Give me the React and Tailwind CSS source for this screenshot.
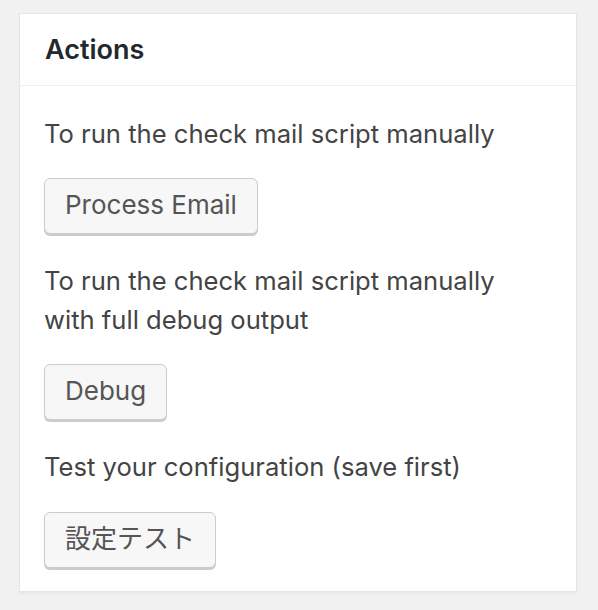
import React from 'react';

const ActionButton = ({ children }) => (
  <button
    type="button"
    className="h-[56px] px-[20px] pb-[2px] rounded-[6px] border border-[#cccccc] bg-[#f7f7f7] text-[#555555] text-[26px] leading-[52px] shadow-[0_2px_0_#cccccc] whitespace-nowrap"
  >
    {children}
  </button>
);

const App = () => {
  const actions = [
    { text: 'To run the check mail script manually', label: 'Process Email' },
    { text: 'To run the check mail script manually with full debug output', label: 'Debug' },
    { text: 'Test your configuration (save first)', label: '設定テスト' },
  ];

  return (
    <div
      className="min-h-[610px] bg-[#f1f1f1] pt-[13px] pl-[19px]"
      style={{ fontFamily: 'Inter, "Noto Sans CJK JP", sans-serif' }}
    >
      <div className="w-[558px] h-[579px] bg-white border border-[#e5e5e5] shadow-[0_2px_2px_rgba(0,0,0,0.04)]">
        {/* Header */}
        <div className="h-[72px] border-b border-[#eeeeee] flex items-center pl-[25px]">
          <h2 className="text-[27px] font-semibold text-[#23282d] leading-none">Actions</h2>
        </div>

        {/* Inside */}
        <div className="px-6 pt-[28px]">
          {actions.map((a, i) => (
            <div key={i} className={i > 0 ? 'mt-[27px]' : ''}>
              <p className="text-[25.6px] leading-[39px] text-[#444444] max-w-[470px]">{a.text}</p>
              <div className={i === 2 ? 'mt-[26px]' : 'mt-[25px]'}>
                <ActionButton>{a.label}</ActionButton>
              </div>
            </div>
          ))}
        </div>
      </div>
    </div>
  );
};

export default App;
